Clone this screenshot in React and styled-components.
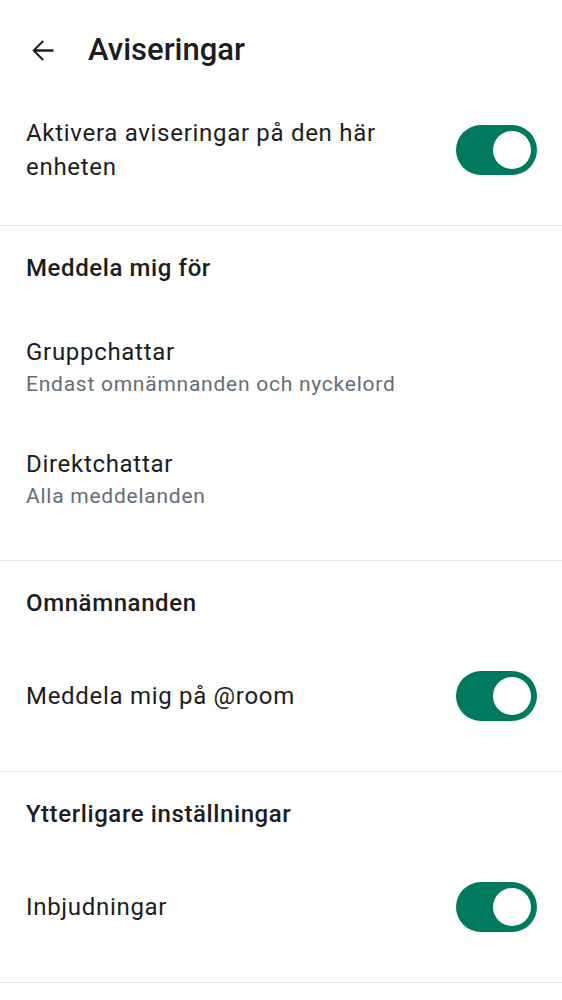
import React from "react";
import styled, { createGlobalStyle } from "styled-components";

const GlobalStyle = createGlobalStyle`
  html, body {
    margin: 0;
    padding: 0;
    background: #fff;
  }
  body {
    font-family: Roboto, "Noto Sans", "Liberation Sans", sans-serif;
    color: #1b1d22;
  }
`;

const Page = styled.div`
  width: 562px;
  background: #fff;
`;

const TopBar = styled.header`
  display: flex;
  align-items: center;
  height: 100px;
  padding: 0 26px;
  box-sizing: border-box;
  gap: 29px;
`;

const BackButton = styled.button`
  display: flex;
  align-items: center;
  justify-content: center;
  width: 33px;
  height: 33px;
  padding: 0;
  border: none;
  background: transparent;
  color: #1b1d22;
  svg {
    width: 33px;
    height: 33px;
  }
`;

const Title = styled.h1`
  margin: 0;
  font-size: 31px;
  font-weight: 500;
  line-height: 36px;
`;

const Section = styled.section`
  padding-bottom: 25px;
  border-bottom: 1px solid #e3e6ea;
`;

const SectionTitle = styled.h2`
  margin: 0;
  padding: 24px 26px 25px;
  font-size: 24px;
  font-weight: 500;
  letter-spacing: 0.6px;
  line-height: 36px;
`;

const Row = styled.div`
  display: flex;
  align-items: center;
  justify-content: space-between;
  gap: 24px;
  min-height: ${(p) => (p.tall ? "112px" : "100px")};
  padding: 0 25px 0 26px;
  box-sizing: border-box;
`;

const TextBlock = styled.div`
  display: flex;
  flex-direction: column;
  max-width: 390px;
`;

const Label = styled.span`
  font-size: 24px;
  letter-spacing: 0.7px;
  line-height: 34px;
`;

const Sub = styled.span`
  font-size: 21px;
  letter-spacing: 0.75px;
  line-height: 30px;
  color: #656d77;
`;

const Track = styled.div`
  position: relative;
  flex-shrink: 0;
  width: 81px;
  height: 50px;
  border-radius: 25px;
  background: ${(p) => (p.on ? "#007a5e" : "#c1c6cd")};
`;

const Knob = styled.div`
  position: absolute;
  top: 6px;
  left: ${(p) => (p.on ? "37px" : "6px")};
  width: 38px;
  height: 38px;
  border-radius: 50%;
  background: #fff;
`;

function Toggle({ on }) {
  return (
    <Track on={on ? 1 : 0}>
      <Knob on={on ? 1 : 0} />
    </Track>
  );
}

export default function App() {
  return (
    <>
      <GlobalStyle />
      <Page>
        <TopBar>
          <BackButton aria-label="Tillbaka">
            <svg viewBox="0 0 24 24" fill="currentColor">
              <path d="M20 11.15H7.5l5.55-5.55L12 4.55 4.55 12 12 19.45l1.05-1.05-5.55-5.55H20v-1.7z" />
            </svg>
          </BackButton>
          <Title>Aviseringar</Title>
        </TopBar>

        <Section>
          <Row>
            <TextBlock>
              <Label>Aktivera aviseringar på den här enheten</Label>
            </TextBlock>
            <Toggle on />
          </Row>
        </Section>

        <Section>
          <SectionTitle>Meddela mig för</SectionTitle>
          <Row tall={1}>
            <TextBlock>
              <Label>Gruppchattar</Label>
              <Sub>Endast omnämnanden och nyckelord</Sub>
            </TextBlock>
          </Row>
          <Row tall={1}>
            <TextBlock>
              <Label>Direktchattar</Label>
              <Sub>Alla meddelanden</Sub>
            </TextBlock>
          </Row>
        </Section>

        <Section>
          <SectionTitle>Omnämnanden</SectionTitle>
          <Row>
            <TextBlock>
              <Label>Meddela mig på @room</Label>
            </TextBlock>
            <Toggle on />
          </Row>
        </Section>

        <Section>
          <SectionTitle>Ytterligare inställningar</SectionTitle>
          <Row>
            <TextBlock>
              <Label>Inbjudningar</Label>
            </TextBlock>
            <Toggle on />
          </Row>
        </Section>
      </Page>
    </>
  );
}
